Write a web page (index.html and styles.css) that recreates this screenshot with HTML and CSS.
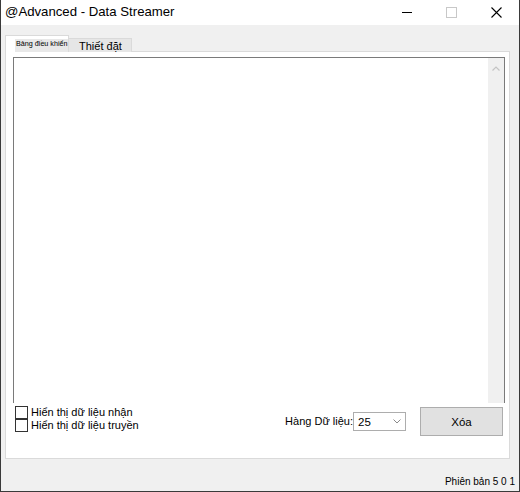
FILE: index.html
```html
<!DOCTYPE html>
<html lang="vi">
<head>
<meta charset="utf-8">
<title>@Advanced - Data Streamer</title>
<link rel="stylesheet" href="styles.css">
</head>
<body>
<div class="window">
  <div class="titlebar">
    <div class="title">@Advanced - Data Streamer</div>
    <div class="caption">
      <div class="cbtn">
        <svg width="10" height="10" viewBox="0 0 10 10"><line x1="0" y1="5.5" x2="10" y2="5.5" stroke="#000" stroke-width="1"/></svg>
      </div>
      <div class="cbtn">
        <svg width="11" height="11" viewBox="0 0 11 11"><rect x="0.5" y="0.5" width="10" height="10" fill="none" stroke="#c8c8c8" stroke-width="1"/></svg>
      </div>
      <div class="cbtn">
        <svg width="11" height="11" viewBox="0 0 11 11"><path d="M0.5 0.5 L10.5 10.5 M10.5 0.5 L0.5 10.5" stroke="#000" stroke-width="1.1" fill="none"/></svg>
      </div>
    </div>
  </div>
  <div class="client">
    <div class="tabs">
      <div class="tab active"><span class="tab-label">Bảng điều khiển</span></div>
      <div class="tab">Thiết đặt</div>
    </div>
    <div class="panel">
      <div class="textbox">
        <div class="text-area"></div>
        <div class="scrollbar">
          <svg width="8" height="5" viewBox="0 0 8 5"><polyline points="0.5,4.5 4,1 7.5,4.5" fill="none" stroke="#c4c4c4" stroke-width="1.2"/></svg>
        </div>
      </div>
      <div class="controls">
        <div class="checks">
          <label class="check"><span class="box"></span><span>Hiển thị dữ liệu nhận</span></label>
          <label class="check"><span class="box"></span><span>Hiển thị dữ liệu truyền</span></label>
        </div>
        <div class="rows">
          <span class="rows-label">Hàng Dữ liệu:</span>
          <div class="combo">
            <span>25</span>
            <svg width="8" height="5" viewBox="0 0 8 5"><polyline points="0.5,0.5 4,4 7.5,0.5" fill="none" stroke="#8a8a8a" stroke-width="1"/></svg>
          </div>
        </div>
        <div class="button">Xóa</div>
      </div>
    </div>
    <div class="footer">Phiên bản 5 0 1</div>
  </div>
</div>
</body>
</html>
```

FILE: styles.css
```css
html, body {
  margin: 0;
  padding: 0;
  background: #ffffff;
}

body {
  font-family: "Liberation Sans", Arial, sans-serif;
  color: #000;
}

.window {
  width: 520px;
  height: 492px;
  box-sizing: border-box;
  border: 1px solid #3a3a3a;
  border-top: none;
  display: flex;
  flex-direction: column;
  overflow: hidden;
}

.titlebar {
  height: 25px;
  flex: 0 0 25px;
  background: #ffffff;
  display: flex;
  align-items: center;
}

.title {
  flex: 1;
  padding-left: 4px;
  font-size: 13.2px;
  line-height: 16px;
  margin-top: -1px;
}

.caption {
  display: flex;
  height: 25px;
}

.cbtn {
  width: 45px;
  height: 25px;
  display: flex;
  align-items: center;
  justify-content: center;
}

.cbtn svg {
  display: block;
  margin-top: -1px;
}

.client {
  flex: 1;
  background: #f0f0f0;
  display: flex;
  flex-direction: column;
  padding: 11px 0 0 4px;
}

.tabs {
  display: flex;
  align-items: flex-end;
  height: 16px;
  margin-bottom: -1px;
  position: relative;
  z-index: 1;
}

.tab {
  box-sizing: border-box;
  height: 14px;
  padding: 0 9px 0 10px;
  background: #e6e6e6;
  border: 1px solid #dadada;
  border-bottom: none;
  border-left: none;
  font-size: 11px;
  line-height: 14px;
}

.tab.active {
  height: 17px;
  width: 64px;
  padding: 3px 0 0 9px;
  background: #ffffff;
  border-left: 1px solid #dadada;
  display: flex;
}

.tab-label {
  display: block;
  flex: 1;
  background: #e8e8e8;
  font-size: 7.2px;
  line-height: 8px;
  padding: 1px 0 0 1px;
  white-space: nowrap;
  overflow: hidden;
}

.panel {
  box-sizing: border-box;
  width: 505px;
  height: 408px;
  background: #ffffff;
  border: 1px solid #dadada;
  padding: 5px 4px 0 7px;
  display: flex;
  flex-direction: column;
}

.textbox {
  box-sizing: border-box;
  height: 346px;
  flex: 0 0 346px;
  border: 1px solid #7a7a7a;
  border-bottom: none;
  display: flex;
}

.text-area {
  flex: 1;
  background: #ffffff;
}

.scrollbar {
  width: 16px;
  background: #f0f0f0;
  display: flex;
  justify-content: center;
  padding-top: 8px;
  box-sizing: border-box;
}

.scrollbar svg {
  display: block;
}

.controls {
  display: flex;
  align-items: flex-start;
  padding-left: 2px;
  padding-right: 2px;
}

.checks {
  display: flex;
  flex-direction: column;
  margin-top: 3px;
}

.check {
  display: flex;
  align-items: center;
  height: 13px;
  font-size: 11px;
  line-height: 13px;
}

.box {
  box-sizing: border-box;
  width: 13px;
  height: 13px;
  border: 1px solid #333333;
  background: #ffffff;
  margin-right: 3px;
}

.rows {
  margin-left: auto;
  display: flex;
  align-items: center;
  margin-top: 9px;
}

.rows-label {
  font-size: 11px;
  line-height: 19px;
}

.combo {
  box-sizing: border-box;
  width: 53px;
  height: 19px;
  border: 1px solid #adadad;
  background: #ffffff;
  display: flex;
  align-items: center;
  justify-content: space-between;
  padding: 0 4px 0 4px;
  font-size: 11.5px;
}

.combo svg {
  display: block;
}

.button {
  box-sizing: border-box;
  width: 83px;
  height: 29px;
  margin-left: 14px;
  margin-top: 4px;
  background: #e1e1e1;
  border: 1px solid #adadad;
  display: flex;
  align-items: center;
  justify-content: center;
  font-size: 11.5px;
}

.footer {
  text-align: right;
  font-size: 10px;
  line-height: 12px;
  padding: 17px 4px 0 0;
}
```
